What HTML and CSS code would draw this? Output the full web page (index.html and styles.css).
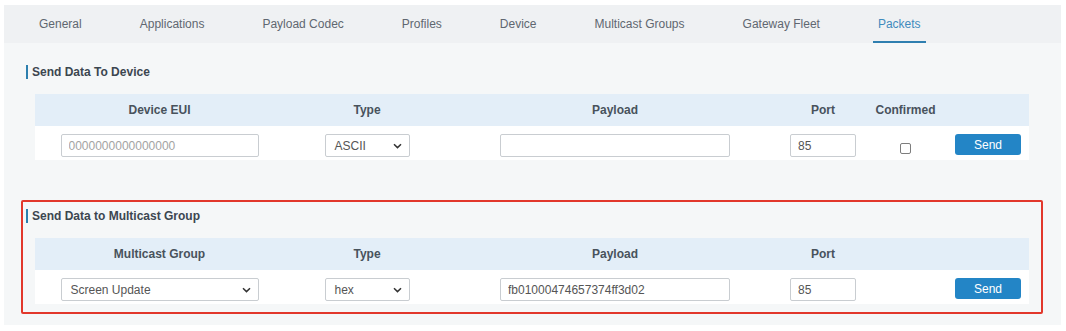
FILE: index.html
```
<!DOCTYPE html>
<html lang="en">
<head>
<meta charset="utf-8">
<title>Packets</title>
<link rel="stylesheet" href="styles.css">
</head>
<body>
<div class="panel">
  <nav class="tabs">
    <span class="tab">General</span>
    <span class="tab">Applications</span>
    <span class="tab">Payload Codec</span>
    <span class="tab">Profiles</span>
    <span class="tab">Device</span>
    <span class="tab">Multicast Groups</span>
    <span class="tab">Gateway Fleet</span>
    <span class="tab active">Packets</span>
  </nav>
  <div class="content">
    <section class="section">
      <h2 class="title">Send Data To Device</h2>
      <div class="grid head">
        <div>Device EUI</div><div>Type</div><div>Payload</div><div>Port</div><div>Confirmed</div><div></div>
      </div>
      <div class="grid row">
        <div class="cell"><input class="field w-eui" type="text" placeholder="0000000000000000"></div>
        <div class="cell"><div class="select w-type"><span>ASCII</span><svg class="chev" width="9" height="6" viewBox="0 0 9 6"><path d="M1 1.2 L4.5 4.6 L8 1.2" fill="none" stroke="#333" stroke-width="1.5"/></svg></div></div>
        <div class="cell"><input class="field w-payload" type="text" value=""></div>
        <div class="cell"><input class="field w-port" type="text" value="85"></div>
        <div class="cell"><span class="check"></span></div>
        <div class="cell"><button class="send">Send</button></div>
      </div>
    </section>
    <section class="section highlight">
      <h2 class="title">Send Data to Multicast Group</h2>
      <div class="grid head">
        <div>Multicast Group</div><div>Type</div><div>Payload</div><div>Port</div><div></div><div></div>
      </div>
      <div class="grid row">
        <div class="cell"><div class="select w-eui"><span>Screen Update</span><svg class="chev" width="9" height="6" viewBox="0 0 9 6"><path d="M1 1.2 L4.5 4.6 L8 1.2" fill="none" stroke="#333" stroke-width="1.5"/></svg></div></div>
        <div class="cell"><div class="select w-type"><span>hex</span><svg class="chev" width="9" height="6" viewBox="0 0 9 6"><path d="M1 1.2 L4.5 4.6 L8 1.2" fill="none" stroke="#333" stroke-width="1.5"/></svg></div></div>
        <div class="cell"><input class="field w-payload" type="text" value="fb01000474657374ff3d02"></div>
        <div class="cell"><input class="field w-port" type="text" value="85"></div>
        <div class="cell"></div>
        <div class="cell"><button class="send">Send</button></div>
      </div>
    </section>
  </div>
</div>
</body>
</html>
```
FILE: styles.css
```
* { box-sizing: border-box; }
html, body { margin: 0; padding: 0; background: #ffffff; }
body {
  font-family: "Liberation Sans", Arial, sans-serif;
  font-size: 12px;
  color: #555;
}
.panel {
  margin: 5px 5px 0 4px;
  height: 320px;
  background: #f5f7f8;
}
.tabs {
  display: flex;
  gap: 48px;
  height: 38px;
  padding-left: 30px;
  background: #eff1f3;
}
.tab {
  padding: 2px 5px 0;
  line-height: 35px;
  height: 38px;
  border-bottom: 2px solid transparent;
  color: #606770;
  white-space: nowrap;
}
.tab.active {
  color: #3f8bbd;
  border-bottom-color: #2f7fb0;
}
.content {
  padding-top: 13px;
}
.section {
  margin: 0 18px 30px 17px;
  border: 2px solid transparent;
  padding: 7px 0 8px 3px;
}
.section.highlight {
  border-color: #e2382c;
  border-radius: 2px;
  margin-bottom: 0;
}
.title {
  margin: 0 0 15px 0;
  font-size: 12px;
  font-weight: bold;
  line-height: 14px;
  color: #3c4650;
  border-left: 2px solid #2d7fae;
  padding-left: 4px;
}
.grid {
  display: grid;
  grid-template-columns: 249px 166px 330px 86px 79px 84px;
  width: 994px;
  margin-left: 9px;
}
.head {
  height: 32px;
  background: #e3eef8;
  align-items: center;
  text-align: center;
  font-weight: bold;
  color: #48525c;
}
.row {
  height: 34px;
  background: #ffffff;
  padding-top: 8px;
}
.cell {
  display: flex;
  justify-content: center;
  align-items: flex-start;
}
.field {
  height: 23px;
  border: 1px solid #c9cdd1;
  border-radius: 2px;
  background: #fff;
  font-family: "Liberation Sans", Arial, sans-serif;
  font-size: 12px;
  color: #555;
  padding: 0 7px;
  outline: none;
  margin: 0;
}
.field::placeholder { color: #a3a3a3; }
.w-eui { width: 198px; }
.w-type { width: 85px; }
.w-payload { width: 230px; }
.w-port { width: 66px; }
.select {
  height: 23px;
  border: 1px solid #c9cdd1;
  border-radius: 2px;
  background: #fff;
  display: flex;
  align-items: center;
  justify-content: space-between;
  padding: 0 7px 0 9px;
  color: #555;
}
.chev { display: block; margin-top: 1px; }
.check {
  display: block;
  width: 11px;
  height: 11px;
  border: 1px solid #7d7d7d;
  border-radius: 2px;
  background: #fff;
  margin-top: 9px;
}
.send {
  width: 66px;
  height: 21px;
  border: none;
  border-radius: 3px;
  background: #2385c6;
  color: #fff;
  font-family: "Liberation Sans", Arial, sans-serif;
  font-size: 12px;
  padding: 0;
  margin: 0 0 0 2px;
}
```
